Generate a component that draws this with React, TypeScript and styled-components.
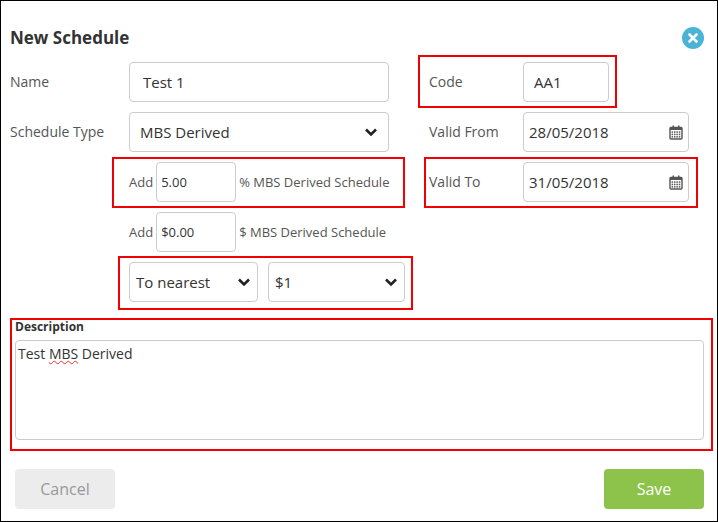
import React from "react";
import styled, { createGlobalStyle } from "styled-components";

const Global = createGlobalStyle`
  html, body { margin: 0; padding: 0; background: #fff; }
  body { font-family: "Open Sans", "Liberation Sans", sans-serif; }
  * { box-sizing: border-box; }
`;

const Frame = styled.div`
  position: relative;
  width: 718px;
  height: 522px;
  border: 1px solid #000;
  background: #fff;
  padding: 0 13px 0 9px;
`;

const Header = styled.div`
  display: flex;
  align-items: center;
  justify-content: space-between;
  height: 50px;
  padding-top: 22px;
`;

const Title = styled.h1`
  margin: 0;
  font-size: 17px;
  font-weight: 700;
  color: #333;
`;

const Close = styled.div`
  width: 22px;
  height: 22px;
  border-radius: 50%;
  background: #4ab3d6;
  display: flex;
  align-items: center;
  justify-content: center;
  margin-top: 2px;
`;

const Columns = styled.div`
  display: flex;
  margin-top: 11px;
`;

const Col = styled.div<{ $w: number; $pl?: number }>`
  width: ${(p) => p.$w}px;
  padding-left: ${(p) => p.$pl ?? 0}px;
  display: flex;
  flex-direction: column;
  gap: 10px;
`;

const Row = styled.div<{ $indent?: number }>`
  display: flex;
  align-items: center;
  height: 40px;
  padding-left: ${(p) => p.$indent ?? 0}px;
  gap: ${(p) => (p.$indent ? 10 : 0)}px;
`;

const Label = styled.div<{ $w?: number }>`
  width: ${(p) => (p.$w ? p.$w + "px" : "auto")};
  flex: none;
  font-size: 14px;
  color: #555;
  margin-top: -2px;
`;

const Small = styled.span`
  font-size: 13px;
  color: #555;
`;

const Input = styled.div<{ $w: number; $small?: boolean; $pad?: number }>`
  width: ${(p) => p.$w}px;
  height: 40px;
  border: 1px solid #ccc;
  border-radius: 4px;
  display: flex;
  align-items: center;
  justify-content: space-between;
  padding: 0 ${(p) => p.$pad ?? 10}px 0 ${(p) => p.$pad ?? 10}px;
  font-size: ${(p) => (p.$small ? 13 : 15)}px;
  color: #333;
  flex: none;
`;

const AddGroup = styled.div`
  display: flex;
  align-items: center;
  gap: 3px;
`;

const DescLabel = styled.div`
  margin: 16px 0 0 5px;
  font-size: 12px;
  font-weight: 700;
  color: #333;
`;

const TextArea = styled.div`
  margin: 5px 0 0 5px;
  height: 100px;
  border: 1px solid #ccc;
  border-radius: 4px;
  padding: 3px 2px;
  font-size: 14px;
  color: #333;
`;

const Squiggle = styled.span`
  text-decoration: underline wavy #e33;
  text-decoration-thickness: 1px;
`;

const Footer = styled.div`
  display: flex;
  justify-content: space-between;
  margin: 29px 0 0 5px;
`;

const Btn = styled.div<{ $save?: boolean }>`
  width: 100px;
  height: 40px;
  border-radius: 4px;
  display: flex;
  align-items: center;
  justify-content: center;
  font-size: 16px;
  background: ${(p) => (p.$save ? "#8dc34a" : "#ececec")};
  color: ${(p) => (p.$save ? "#fff" : "#999")};
`;

const Mark = styled.div<{ $x: number; $y: number; $w: number; $h: number }>`
  position: absolute;
  left: ${(p) => p.$x}px;
  top: ${(p) => p.$y}px;
  width: ${(p) => p.$w}px;
  height: ${(p) => p.$h}px;
  border: 2px solid #f00000;
  pointer-events: none;
`;

const Chevron = () => (
  <svg width="14" height="10" viewBox="0 0 14 10">
    <path d="M2 2.5 L7 7.5 L12 2.5" fill="none" stroke="#222" strokeWidth="2.6" />
  </svg>
);

const Cal = () => (
  <svg width="14" height="15" viewBox="0 0 14 15">
    <rect x="1" y="2.5" width="12" height="11.5" rx="1" fill="none" stroke="#555" strokeWidth="1.4" />
    <rect x="1" y="2.5" width="12" height="2.5" fill="#555" />
    <rect x="3.5" y="0.5" width="1.5" height="3" fill="#555" />
    <rect x="9" y="0.5" width="1.5" height="3" fill="#555" />
    {[0, 1, 2].map((r) =>
      [0, 1, 2, 3].map((c) => (
        <rect key={r + "-" + c} x={2.6 + c * 2.4} y={6.3 + r * 2.4} width="1.5" height="1.5" fill="#555" />
      ))
    )}
  </svg>
);

export default function App() {
  return (
    <>
      <Global />
      <Frame>
        <Header>
          <Title>New Schedule</Title>
          <Close>
            <svg width="12" height="12" viewBox="0 0 12 12">
              <path d="M2.5 2.5 L9.5 9.5 M9.5 2.5 L2.5 9.5" stroke="#fff" strokeWidth="2.6" strokeLinecap="round" />
            </svg>
          </Close>
        </Header>
        <Columns>
          <Col $w={380}>
            <Row>
              <Label $w={119}>Name</Label>
              <Input $w={260} $pad={13}>Test 1</Input>
            </Row>
            <Row>
              <Label $w={119}>Schedule Type</Label>
              <Input $w={260} $pad={10}>MBS Derived<Chevron /></Input>
            </Row>
            <Row $indent={119}>
              <AddGroup>
                <Small>Add</Small>
                <Input $w={80} $small $pad={4}>5.00</Input>
                <Small>% MBS Derived Schedule</Small>
              </AddGroup>
            </Row>
            <Row $indent={119}>
              <AddGroup>
                <Small>Add</Small>
                <Input $w={80} $small $pad={4}>$0.00</Input>
                <Small>$ MBS Derived Schedule</Small>
              </AddGroup>
            </Row>
            <Row $indent={119}>
              <Input $w={129} $pad={6}>To nearest<Chevron /></Input>
              <Input $w={137} $pad={6}>$1<Chevron /></Input>
            </Row>
          </Col>
          <Col $w={300} $pl={39}>
            <Row>
              <Label $w={94}>Code</Label>
              <Input $w={86} $pad={10}>AA1</Input>
            </Row>
            <Row>
              <Label $w={94}>Valid From</Label>
              <Input $w={166} $pad={5}>28/05/2018<Cal /></Input>
            </Row>
            <Row>
              <Label $w={94}>Valid To</Label>
              <Input $w={166} $pad={5}>31/05/2018<Cal /></Input>
            </Row>
          </Col>
        </Columns>
        <DescLabel>Description</DescLabel>
        <TextArea>
          Test <Squiggle>MBS</Squiggle> Derived
        </TextArea>
        <Footer>
          <Btn>Cancel</Btn>
          <Btn $save>Save</Btn>
        </Footer>
        <Mark $x={417} $y={54} $w={199} $h={53} />
        <Mark $x={111} $y={156} $w={293} $h={51} />
        <Mark $x={423} $y={156} $w={274} $h={51} />
        <Mark $x={117} $y={255} $w={295} $h={54} />
        <Mark $x={9} $y={317} $w={703} $h={133} />
      </Frame>
    </>
  );
}
